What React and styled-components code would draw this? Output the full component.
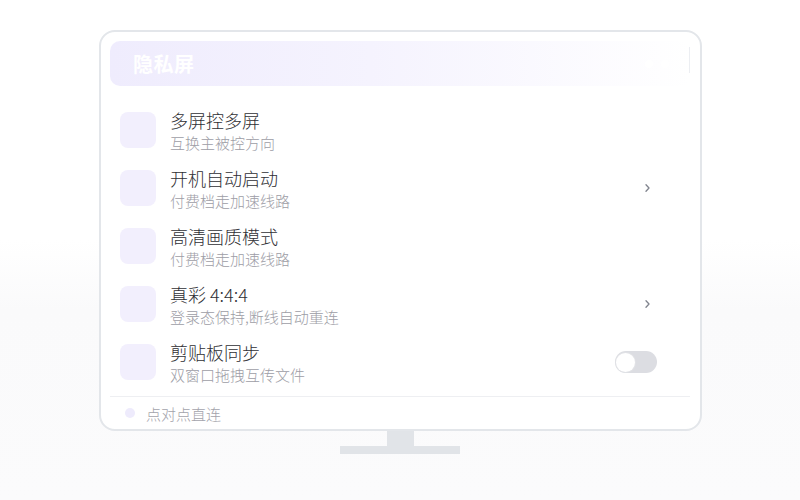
import React from "react";
import styled, { createGlobalStyle } from "styled-components";

const Global = createGlobalStyle`
  html, body { margin: 0; padding: 0; }
  body {
    font-family: "Noto Sans CJK SC", "Noto Sans", sans-serif;
    background: #ffffff;
  }
`;

const rows = [
  { title: "多屏控多屏", sub: "互换主被控方向" },
  { title: "开机自动启动", sub: "付费档走加速线路", trail: "chevron" },
  { title: "高清画质模式", sub: "付费档走加速线路" },
  { title: "真彩 4:4:4", sub: "登录态保持,断线自动重连", trail: "chevron" },
  { title: "剪贴板同步", sub: "双窗口拖拽互传文件", trail: "toggle" },
];

function App() {
  return (
    <Page>
      <Global />
      <Monitor>
        <Header>
          <HeaderTitle>隐私屏</HeaderTitle>
          <HeaderDots>
            <span />
            <span />
          </HeaderDots>
          <HeaderEdge />
        </Header>
        <List>
          {rows.map((r) => (
            <Row key={r.title}>
              <IconBox />
              <Texts>
                <Title>{r.title}</Title>
                <Sub>{r.sub}</Sub>
              </Texts>
              <Trail>
                {r.trail === "chevron" && (
                  <Chevron viewBox="0 0 5 8">
                    <path d="M1 0.8 L4 4 L1 7.2" />
                  </Chevron>
                )}
                {r.trail === "toggle" && (
                  <Toggle>
                    <Knob />
                  </Toggle>
                )}
              </Trail>
            </Row>
          ))}
        </List>
        <Divider />
        <Footer>
          <Dot />
          <FooterText>点对点直连</FooterText>
        </Footer>
      </Monitor>
      <Neck />
      <Base />
    </Page>
  );
}

export default App;

const Page = styled.div`
  width: 800px;
  height: 500px;
  box-sizing: border-box;
  padding-top: 30px;
  display: flex;
  flex-direction: column;
  align-items: center;
  background: linear-gradient(180deg, #ffffff 0%, #ffffff 48%, #fafafb 62%, #fbfbfc 100%);
  overflow: hidden;
`;

const Monitor = styled.div`
  width: 603px;
  height: 401px;
  margin-left: 1px;
  box-sizing: border-box;
  border: 2px solid #e3e6ea;
  border-radius: 16px;
  background: #ffffff;
  padding: 9px 10px 0 9px;
  display: flex;
  flex-direction: column;
`;

const Header = styled.div`
  height: 45px;
  border-radius: 10px;
  background: linear-gradient(90deg, #efecfd 0%, #f5f3fe 45%, #ffffff 100%);
  display: flex;
  align-items: center;
  padding-left: 23px;
`;

const HeaderTitle = styled.div`
  color: #ffffff;
  font-size: 20px;
  font-weight: 700;
  letter-spacing: 0.5px;
  flex: 1;
`;

const HeaderDots = styled.div`
  display: flex;
  gap: 8px;
  margin-right: 20px;
  span {
    width: 8px;
    height: 8px;
    border-radius: 50%;
    background: #ffffff;
  }
`;

const HeaderEdge = styled.div`
  width: 1px;
  height: 26px;
  align-self: flex-start;
  margin-top: 6px;
  background: #eceef2;
`;

const List = styled.div`
  margin-top: 15px;
  display: flex;
  flex-direction: column;
`;

const Row = styled.div`
  height: 58px;
  display: flex;
  align-items: center;
  padding-left: 10px;
  padding-right: 33px;
`;

const IconBox = styled.div`
  width: 36px;
  height: 36px;
  border-radius: 8px;
  background: #f2effd;
  flex-shrink: 0;
`;

const Texts = styled.div`
  margin-left: 14px;
  flex: 1;
  display: flex;
  flex-direction: column;
  padding-top: 4px;
`;

const Title = styled.div`
  font-size: 18px;
  font-weight: 300;
  line-height: 22px;
  color: #2f2f34;
`;

const Sub = styled.div`
  font-size: 15px;
  font-weight: 300;
  line-height: 24px;
  color: #9d9da6;
`;

const Trail = styled.div`
  width: 42px;
  display: flex;
  justify-content: flex-end;
  align-items: center;
`;

const Chevron = styled.svg`
  width: 5px;
  height: 8px;
  margin-right: 7px;
  fill: none;
  stroke: #80848e;
  stroke-width: 1.3;
  stroke-linecap: round;
  stroke-linejoin: round;
`;

const Toggle = styled.div`
  width: 42px;
  height: 22px;
  border-radius: 11px;
  background: #dcdde2;
  display: flex;
  align-items: center;
  padding-left: 1px;
  box-sizing: border-box;
`;

const Knob = styled.div`
  width: 19px;
  height: 19px;
  border-radius: 50%;
  background: #ffffff;
  box-shadow: 0 0 0 1px #e1e2e6;
`;

const Divider = styled.div`
  margin-top: 5px;
  height: 1px;
  background: #eeeff2;
`;

const Footer = styled.div`
  flex: 1;
  display: flex;
  align-items: center;
  padding-left: 15px;
`;

const Dot = styled.div`
  width: 10px;
  height: 10px;
  border-radius: 50%;
  background: #eeebfc;
`;

const FooterText = styled.div`
  margin-left: 11px;
  font-size: 15px;
  font-weight: 300;
  color: #a3a3ab;
`;

const Neck = styled.div`
  width: 27px;
  height: 15px;
  background: #e1e4e8;
`;

const Base = styled.div`
  width: 120px;
  height: 8px;
  background: #e1e4e8;
`;
